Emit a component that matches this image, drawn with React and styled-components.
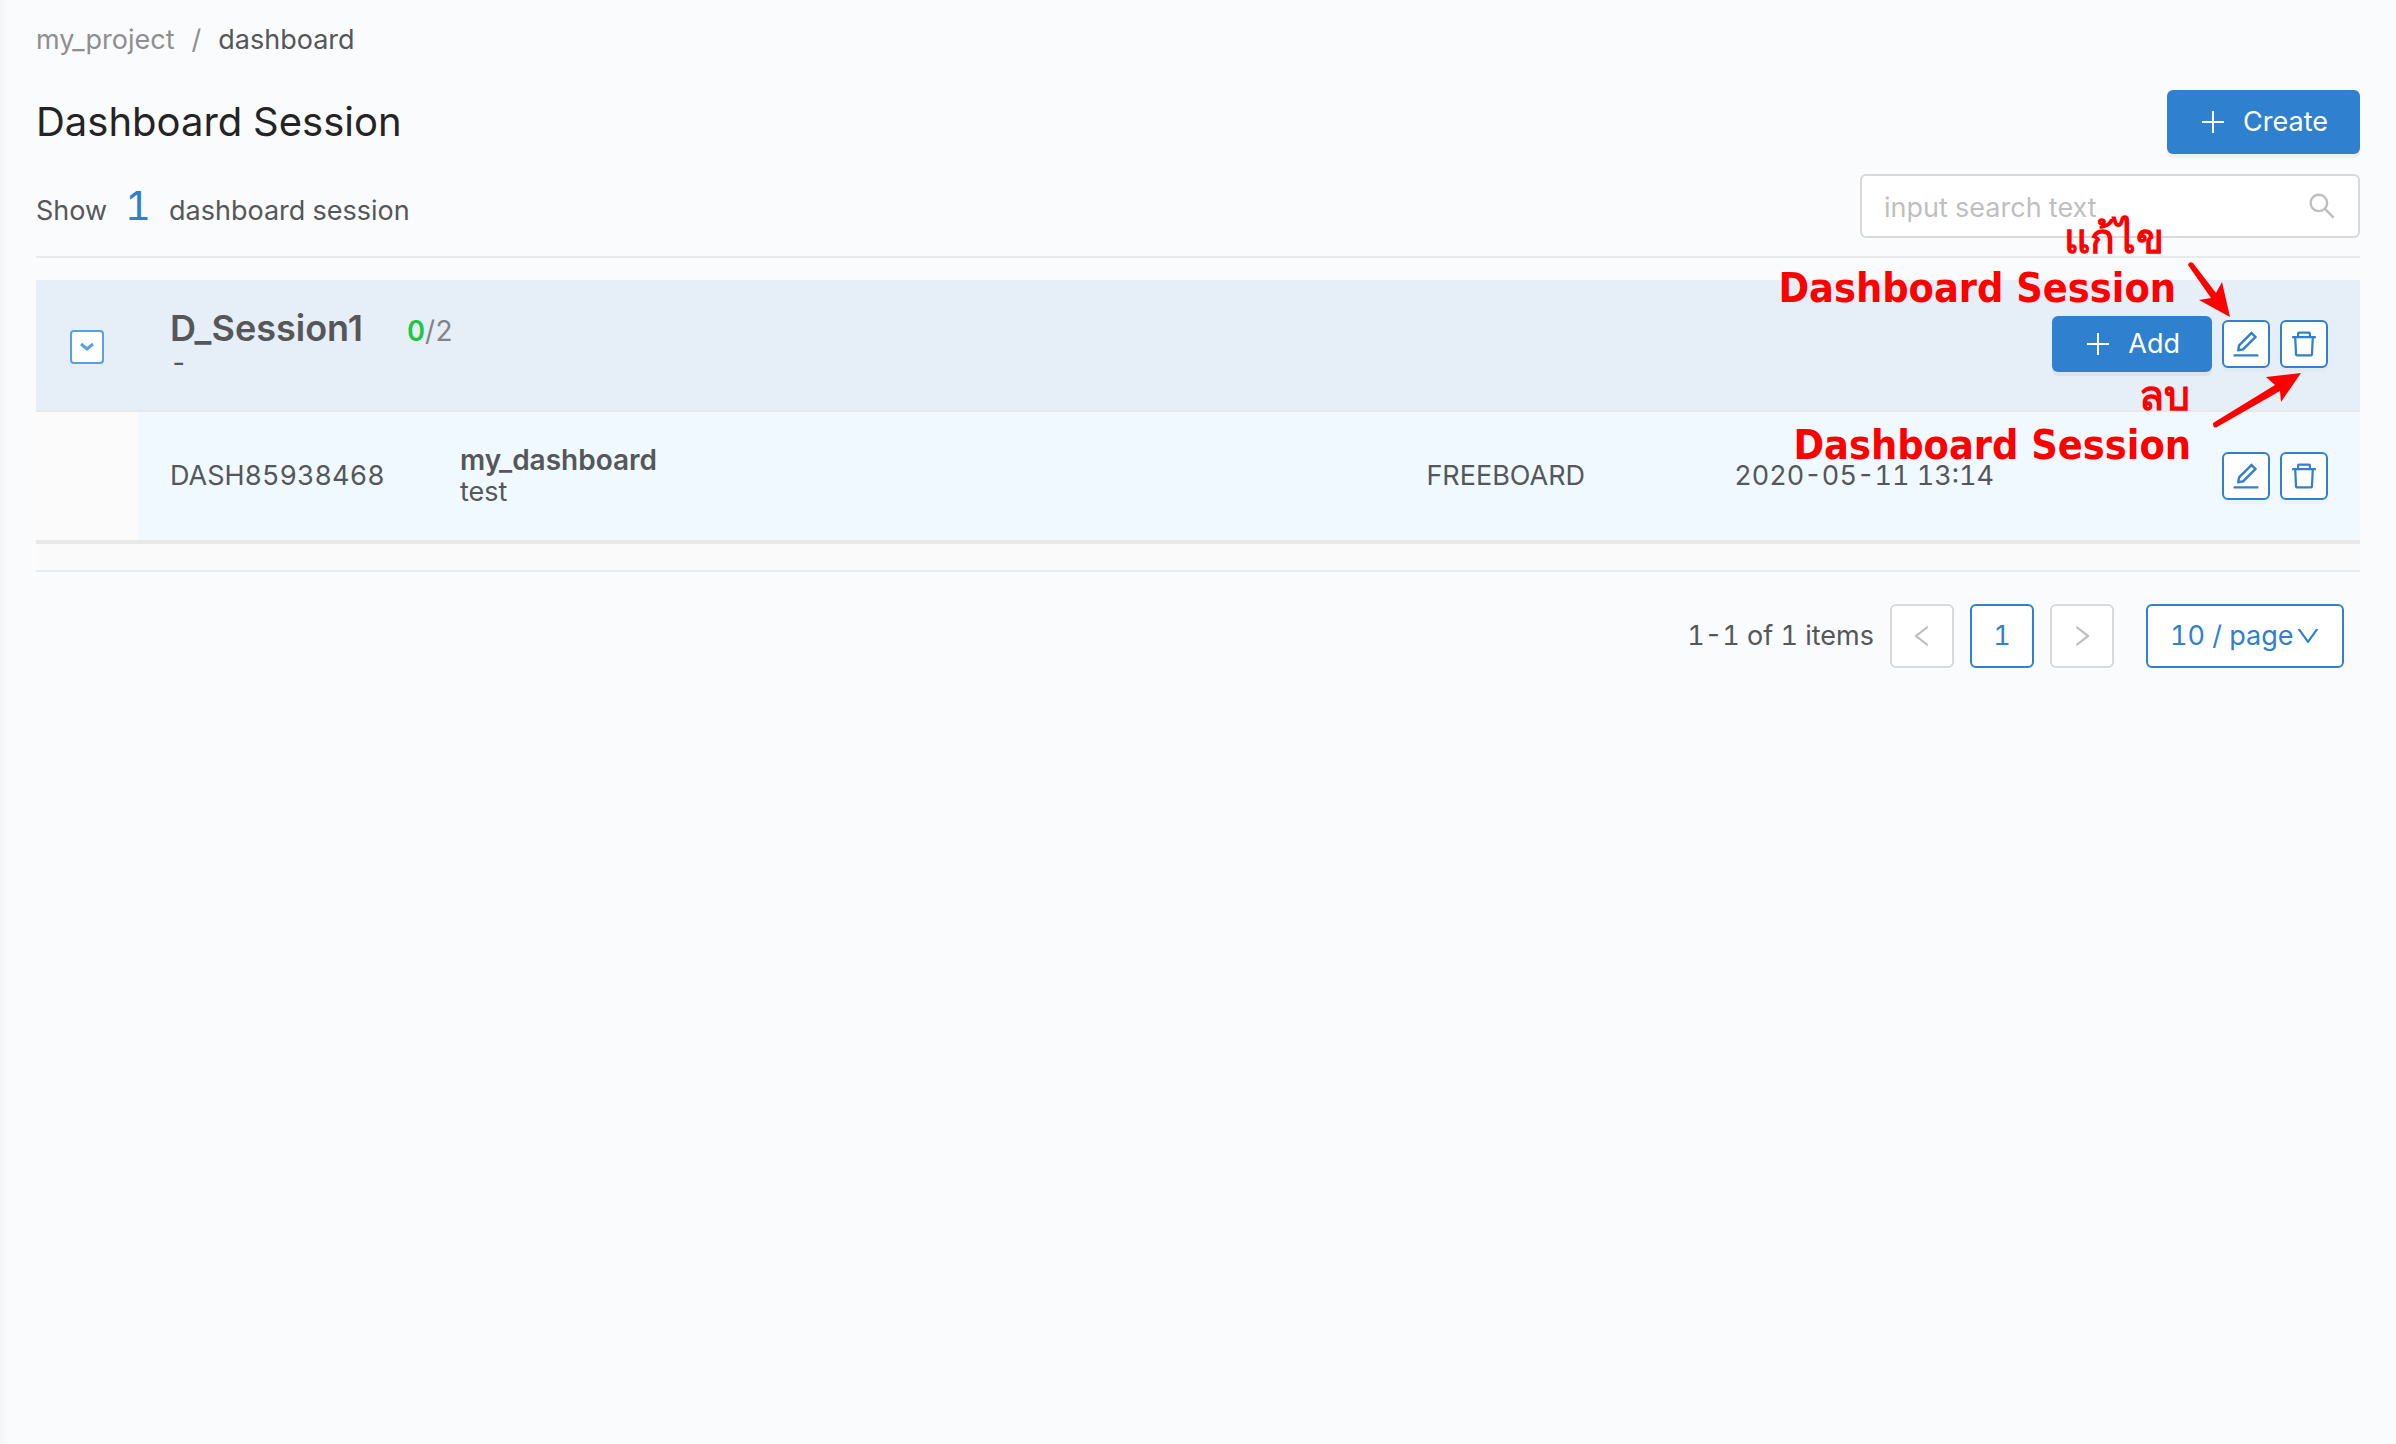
import React from "react";
import styled, { createGlobalStyle } from "styled-components";
import {
  AiOutlineDelete,
  AiOutlineDown,
  AiOutlineEdit,
  AiOutlineLeft,
  AiOutlineRight,
  AiOutlineSearch,
} from "react-icons/ai";

const GlobalStyle = createGlobalStyle`
  *, *::before, *::after { box-sizing: border-box; }
  body {
    margin: 0;
    background: #fafbfd;
    color: #555759;
    font-family: Inter, Roboto, "Liberation Sans", sans-serif;
    font-size: 27px;
    line-height: 32px;
    font-feature-settings: "tnum";
  }
  button, input, select { font: inherit; font-feature-settings: inherit; }
`;

const Page = styled.main`
  position: relative;
  min-height: 100vh;
  padding: 24px 36px;
  box-shadow: inset 8px 0 8px -8px rgba(0, 0, 0, 0.06);
`;

const Breadcrumb = styled.nav`
  display: flex;
  gap: 17px;
  color: #8e8f91;
`;

const Crumb = styled.a`
  color: ${(p) => (p.$current ? "#555759" : "#8e8f91")};
  text-decoration: none;
`;

const TitleBar = styled.header`
  display: flex;
  align-items: center;
  justify-content: space-between;
  margin-top: 34px;
`;

const Title = styled.h1`
  margin: 0;
  color: #242424;
  font-size: 40px;
  line-height: 48px;
  font-weight: 400;
`;

const PrimaryButton = styled.button`
  display: inline-flex;
  align-items: center;
  gap: 16px;
  height: ${(p) => (p.$compact ? 56 : 64)}px;
  padding: 0 32px;
  border: 0;
  border-radius: 6px;
  background: #3080d0;
  color: #fff;
  white-space: nowrap;
  box-shadow: 0 4px 0 rgba(0, 0, 0, 0.045);
`;

const Toolbar = styled.div`
  display: flex;
  align-items: center;
  justify-content: space-between;
  margin-top: 20px;
  padding-bottom: 18px;
  border-bottom: 2px solid #e8e9eb;
`;

const Summary = styled.p`
  display: flex;
  align-items: baseline;
  gap: 18px;
  margin: 0;
  padding-top: 4px;
`;

const Count = styled.span`
  color: #3080d0;
  font-size: 40px;
`;

const SearchBox = styled.label`
  display: flex;
  align-items: center;
  width: 500px;
  height: 64px;
  padding: 0 20px 0 22px;
  border: 2px solid #d9d9d9;
  border-radius: 6px;
  background: #fff;
  color: #bfbfbf;
`;

const SearchInput = styled.input`
  flex: 1;
  min-width: 0;
  padding: 4px 0 0;
  border: 0;
  outline: 0;
  background: transparent;
  &::placeholder { color: #bfbfbf; opacity: 1; }
`;

const TablePanel = styled.section`
  margin-top: 22px;
  padding-bottom: 26px;
  border-bottom: 2px solid #ebecee;
  background: #fafafa;
`;

const Table = styled.table`
  width: 100%;
  table-layout: fixed;
  border-collapse: separate;
  border-spacing: 0;
`;

const Col = styled.col`
  width: ${(p) => p.$width};
`;

const SessionRow = styled.tr`
  height: 132px;
  background: #e6eef8;
`;

const DashboardRow = styled.tr`
  height: 132px;
  background: #f0f9ff;
`;

const Cell = styled.td`
  padding: 0 32px;
  border-bottom: ${(p) => (p.$last ? 4 : 2)}px solid #e8e8e8;
  vertical-align: middle;
  white-space: nowrap;
`;

const SessionCell = styled(Cell)`
  padding-bottom: 2px;
`;

const IndentCell = styled(Cell)`
  background: #fbfbfb;
`;

const ExpandButton = styled.button`
  display: flex;
  align-items: center;
  justify-content: center;
  width: 34px;
  height: 34px;
  margin: 6px auto 0;
  padding: 0;
  border: 2px solid #58a0e0;
  border-radius: 4px;
  background: #fff;
  color: #58a0e0;
`;

const SessionHeading = styled.div`
  display: flex;
  align-items: baseline;
  gap: 44px;
`;

const SessionName = styled.h2`
  margin: 0;
  font-size: 36px;
  line-height: 38px;
  font-weight: 600;
  font-feature-settings: normal;
`;

const Quota = styled.span`
  color: #808488;
  font-size: 28px;
`;

const QuotaUsed = styled.b`
  color: #1dc840;
  font-weight: 600;
`;

const DashboardName = styled.strong`
  display: block;
  font-size: 28px;
  font-weight: 600;
`;

const Actions = styled.div`
  display: flex;
  align-items: center;
  justify-content: flex-end;
  gap: 10px;
`;

const IconButton = styled.button`
  display: inline-flex;
  align-items: center;
  justify-content: center;
  width: 48px;
  height: 48px;
  padding: 0;
  border: 2px solid #3080d0;
  border-radius: 6px;
  background: #fff;
  color: #3080d0;
  box-shadow: 0 4px 0 rgba(0, 0, 0, 0.02);
`;

const Pagination = styled.nav`
  display: flex;
  align-items: center;
  justify-content: flex-end;
  gap: 16px;
  padding: 32px 16px 0;
`;

const PageButton = styled.button`
  display: inline-flex;
  align-items: center;
  justify-content: center;
  width: 64px;
  height: 64px;
  padding: 0;
  border: 2px solid ${(p) => (p.$active ? "#3080d0" : "#d9d9d9")};
  border-radius: 6px;
  background: #fff;
  color: ${(p) => (p.$active ? "#3080d0" : "#bfbfbf")};
`;

const PageSize = styled.label`
  position: relative;
  display: block;
  margin-left: 16px;
  color: #3080d0;
  svg {
    position: absolute;
    top: 18px;
    right: 22px;
    pointer-events: none;
  }
`;

const PageSizeSelect = styled.select`
  width: 198px;
  height: 64px;
  padding: 0 22px;
  border: 2px solid #3080d0;
  border-radius: 6px;
  appearance: none;
  background: #fff;
  color: #3080d0;
`;

const Note = styled.div`
  position: absolute;
  top: ${(p) => p.$top}px;
  right: ${(p) => p.$right}px;
  color: #ff0000;
  font-family: "DejaVu Sans Condensed", "Noto Sans", sans-serif;
  font-size: 41px;
  line-height: 48px;
  font-weight: 700;
  white-space: nowrap;
  pointer-events: none;
`;

const ThaiNote = styled(Note)`
  font-family: "Noto Sans", "Open Sans", sans-serif;
`;

const Arrow = styled.svg`
  position: absolute;
  top: ${(p) => p.$top}px;
  right: ${(p) => p.$right}px;
  fill: #ff0000;
  pointer-events: none;
`;

function PlusIcon() {
  return (
    <svg width="28" height="28" viewBox="0 0 28 28" fill="none" stroke="currentColor" strokeWidth="2">
      <path d="M14 3 V25 M3 14 H25" />
    </svg>
  );
}

function RowActions({ children, subject }) {
  return (
    <Actions>
      {children}
      <IconButton type="button" aria-label={`Edit ${subject}`}>
        <AiOutlineEdit size={32} />
      </IconButton>
      <IconButton type="button" aria-label={`Delete ${subject}`}>
        <AiOutlineDelete size={32} />
      </IconButton>
    </Actions>
  );
}

export default function App() {
  return (
    <Page>
      <GlobalStyle />
      <Breadcrumb aria-label="Breadcrumb">
        <Crumb href="#project">my_project</Crumb>
        <span>/</span>
        <Crumb href="#dashboard" $current>dashboard</Crumb>
      </Breadcrumb>

      <TitleBar>
        <Title>Dashboard Session</Title>
        <PrimaryButton type="button">
          <PlusIcon />
          Create
        </PrimaryButton>
      </TitleBar>

      <Toolbar>
        <Summary>
          <span>Show</span>
          <Count>1</Count>
          <span>dashboard session</span>
        </Summary>
        <SearchBox>
          <SearchInput type="text" placeholder="input search text" aria-label="Search" />
          <AiOutlineSearch size={32} />
        </SearchBox>
      </Toolbar>

      <TablePanel>
        <Table>
          <colgroup>
            <Col $width="102px" />
            <Col $width="290px" />
            <Col />
            <Col $width="13.25%" />
            <Col $width="18%" />
            <Col $width="10.3%" />
          </colgroup>
          <tbody>
            <SessionRow>
              <SessionCell>
                <ExpandButton type="button" aria-label="Collapse session">
                  <svg width="14" height="10" viewBox="0 0 14 10" fill="none" stroke="currentColor" strokeWidth="3">
                    <path d="M1 2 L7 7 L13 2" />
                  </svg>
                </ExpandButton>
              </SessionCell>
              <SessionCell colSpan={3}>
                <SessionHeading>
                  <SessionName>D_Session1</SessionName>
                  <Quota><QuotaUsed>0</QuotaUsed>/2</Quota>
                </SessionHeading>
                -
              </SessionCell>
              <SessionCell colSpan={2}>
                <RowActions subject="session">
                  <PrimaryButton type="button" $compact>
                    <PlusIcon />
                    Add
                  </PrimaryButton>
                </RowActions>
              </SessionCell>
            </SessionRow>
            <DashboardRow>
              <IndentCell $last />
              <Cell $last>DASH85938468</Cell>
              <Cell $last>
                <DashboardName>my_dashboard</DashboardName>
                test
              </Cell>
              <Cell $last>FREEBOARD</Cell>
              <Cell $last>2020-05-11 13:14</Cell>
              <Cell $last>
                <RowActions subject="dashboard" />
              </Cell>
            </DashboardRow>
          </tbody>
        </Table>
      </TablePanel>

      <Pagination aria-label="Pagination">
        <span>1-1 of 1 items</span>
        <PageButton type="button" disabled aria-label="Previous page"><AiOutlineLeft size={28} /></PageButton>
        <PageButton type="button" $active>1</PageButton>
        <PageButton type="button" disabled aria-label="Next page"><AiOutlineRight size={28} /></PageButton>
        <PageSize>
          <PageSizeSelect aria-label="Items per page" defaultValue="10">
            <option value="10">10 / page</option>
          </PageSizeSelect>
          <AiOutlineDown size={28} />
        </PageSize>
      </Pagination>

      <ThaiNote $top={213} $right={232}>แก้ไข</ThaiNote>
      <Note $top={264} $right={220}>Dashboard Session</Note>
      <Arrow $top={260} $right={164} width="46" height="60" viewBox="0 0 46 60">
        <path d="M2 5 Q3 1 7 3 L30 33 L36 22 L44 57 L13 40 L25 38 Z" />
      </Arrow>
      <ThaiNote $top={370} $right={206}>ลบ</ThaiNote>
      <Note $top={421} $right={205}>Dashboard Session</Note>
      <Arrow $top={370} $right={92} width="94" height="60" viewBox="0 0 94 60">
        <path d="M3 53 L65 15 L56 7 L91 3 L71 32 L70 21 L7 57 Q3 59 3 53 Z" />
      </Arrow>
    </Page>
  );
}
